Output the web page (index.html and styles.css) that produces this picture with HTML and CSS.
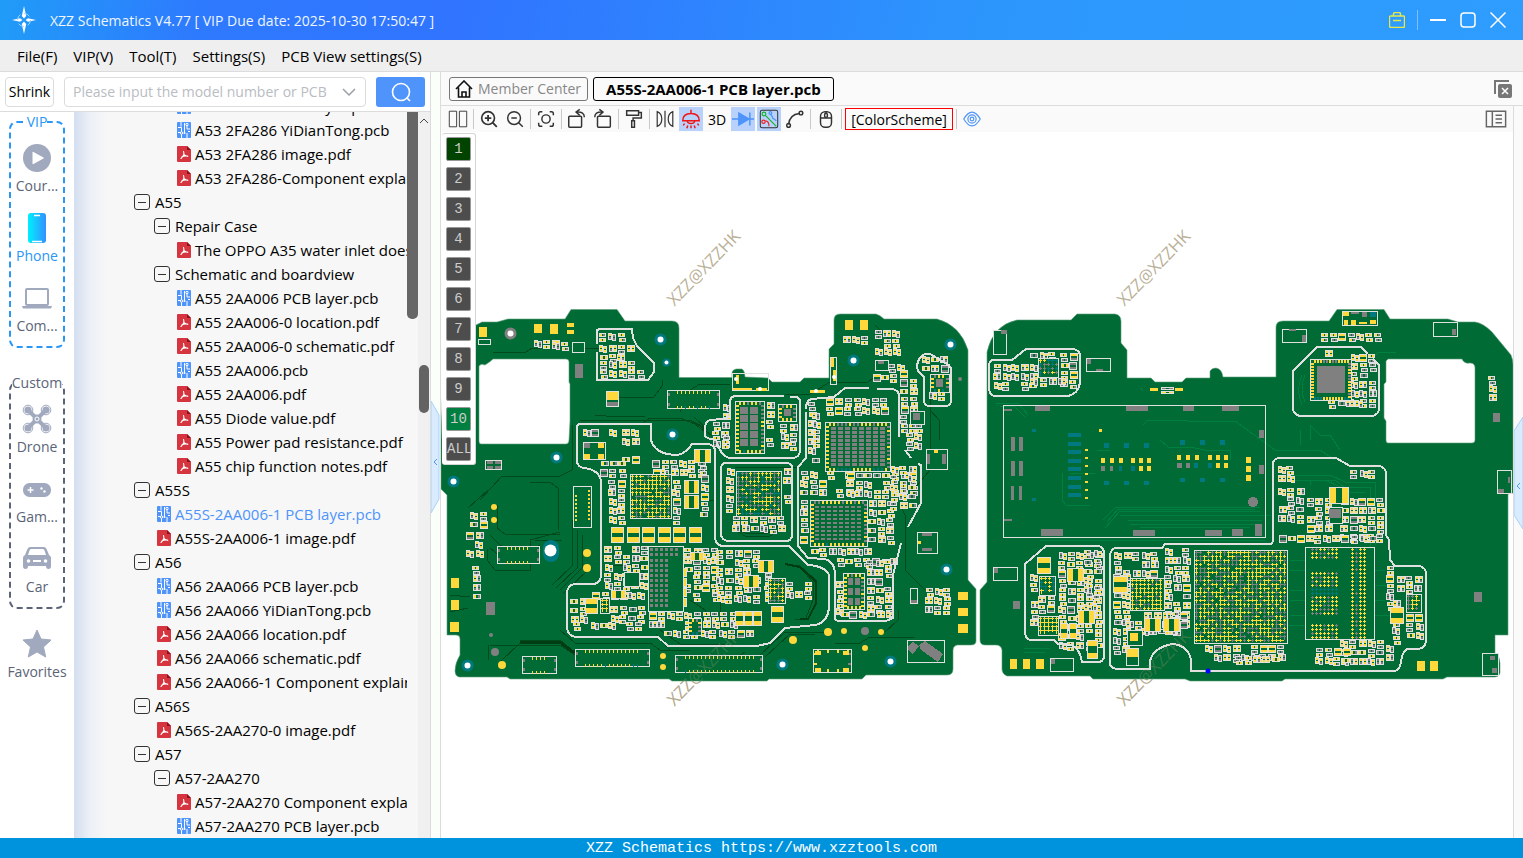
FILE: index.html
```html
<!DOCTYPE html>
<html lang="en">
<head>
  <meta charset="UTF-8">
  <meta name="viewport" content="width=device-width, initial-scale=1.0">
  <title>XZZ Schematics</title>
  <link rel="stylesheet" href="styles.css">
</head>
<body>

  <svg class="sprite" aria-hidden="true">
    <symbol id="pcb" viewBox="0 0 14 16">
      <rect width="14" height="16" rx="1" fill="#4e94fb"/>
      <path d="M4 0v4.500M1 5.500h3.500v5M10 3v4h3M7.500 1v9.500M4.500 12v4M10 16v-5M1 10.500h2M11 9.500h2" fill="none" stroke="#fff"/>
      <circle cx="10" cy="2.500" r="1.200" fill="#4e94fb" stroke="#fff"/>
      <circle cx="4.500" cy="11" r="1.200" fill="#4e94fb" stroke="#fff"/>
      <circle cx="7.500" cy="11" r="1" fill="#fff"/>
    </symbol>
    <symbol id="pdf" viewBox="0 0 14 16">
      <path d="M1 0h9l4 4v11a1 1 0 0 1-1 1H1a1 1 0 0 1-1-1V1a1 1 0 0 1 1-1z" fill="#d6353f"/>
      <path d="M10 0l4 4h-4z" fill="#8e1018"/>
      <path d="M6.500 5.500c1 2 .5 4-2.500 7M6.800 8c.8 1.500 2 2.500 4 2.500M5 10.800c2-1 3.500-1.200 5.500-.8" fill="none" stroke="#fff" stroke-width="1.100" stroke-linecap="round"/>
    </symbol>
  </svg>

  <header class="titlebar">
    <svg class="logo" viewBox="0 0 24 28">
      <path d="M12 0l2.200 10L12 12.500 9.800 10zM12 28l2.200-10L12 15.500 9.800 18zM0 14l8-1.800 2.500 1.800L8 15.800zM24 14l-8-1.800-2.500 1.800 2.500 1.800z" fill="#fff"/>
      <circle cx="12" cy="14" r="6.500" fill="none" stroke="#9fd4ff" stroke-dasharray="6 4"/>
    </svg>
    <h1>XZZ Schematics V4.77 [ VIP Due date: 2025-10-30 17:50:47 ]</h1>
    <button class="win-btn" aria-label="Toolbox">
      <svg viewBox="0 0 16 16"><path d="M1.500 4h13q1 0 1 1v9q0 1.500-1.500 1.500H2Q.5 15.500.5 14V5q0-1 1-1zM4.500 4V2q0-1.500 1.500-1.500h4q1.500 0 1.500 1.500v2M4 8.500h8" fill="none" stroke="#e5e84a" stroke-width="1.400"/></svg>
    </button>
    <span class="win-sep"></span>
    <button class="win-btn" aria-label="Minimize">
      <svg viewBox="0 0 16 16"><path d="M0 8h16" stroke="#fff" stroke-width="2"/></svg>
    </button>
    <button class="win-btn" aria-label="Maximize">
      <svg viewBox="0 0 16 16"><rect x="1" y="1" width="14" height="14" rx="3" fill="none" stroke="#fff" stroke-width="1.500"/></svg>
    </button>
    <button class="win-btn" aria-label="Close">
      <svg viewBox="0 0 16 16"><path d="M.5.500l15 15M15.500.500l-15 15" stroke="#fff" stroke-width="1.500"/></svg>
    </button>
  </header>

  <nav class="menubar">
    <button>File(F)</button>
    <button>VIP(V)</button>
    <button>Tool(T)</button>
    <button>Settings(S)</button>
    <button>PCB View settings(S)</button>
  </nav>

  <main class="main">
    <section class="left">
      <form class="search" onsubmit="return false">
        <button type="button" class="shrink">Shrink</button>
        <div class="search-box">
          <input type="text" aria-label="Model number" placeholder="Please input the model number or PCB">
          <svg viewBox="0 0 14 10"><path d="M1 2l6 6 6-6" fill="none" stroke="#9a9ea6" stroke-width="1.500"/></svg>
        </div>
        <button type="submit" class="search-btn" aria-label="Search">
          <svg viewBox="0 0 20 20"><circle cx="10" cy="10" r="8.500" fill="none" stroke="#fff" stroke-width="1.600"/><path d="M15.500 15.500l3.500 3.500" stroke="#fff" stroke-width="1.600"/></svg>
        </button>
      </form>

      <div class="browser">
        <div class="sidebar">
          <fieldset class="group vip">
            <legend>VIP</legend>
            <button class="cat">
              <svg viewBox="0 0 30 32"><circle cx="15" cy="16" r="14" fill="#a0a9be"/><path d="M10.500 10.500v11q0 1 1 .5l10-5.500q.8-.5 0-1l-10-5.500q-1-.5-1 .5z" fill="#fff"/></svg>
              <span>Cour...</span>
            </button>
            <button class="cat on">
              <svg viewBox="0 0 30 32">
                <defs><linearGradient id="ph"><stop offset="0" stop-color="#00f0ff"/><stop offset="1" stop-color="#3390ff"/></linearGradient></defs>
                <rect x="6" y="1" width="18" height="30" rx="3" fill="url(#ph)"/>
                <path d="M12 3.500h6M10 29.500h10" stroke="#fff" stroke-width="1.300"/>
              </svg>
              <span>Phone</span>
            </button>
            <button class="cat">
              <svg viewBox="0 0 30 32"><rect x="4" y="7" width="22" height="16" rx="1" fill="none" stroke="#a0a9be" stroke-width="2"/><path d="M0 24h30l-1 2.500H1z" fill="#a0a9be"/></svg>
              <span>Com...</span>
            </button>
          </fieldset>
          <fieldset class="group">
            <legend>Custom</legend>
            <button class="cat">
              <svg viewBox="0 0 30 32">
                <path d="M6 7l9 9 9-9M6 25l9-9 9 9" fill="none" stroke="#a0a9be" stroke-width="4"/>
                <circle cx="15" cy="16" r="4.500" fill="#a0a9be"/><circle cx="15" cy="16" r="2" fill="none" stroke="#fff"/>
                <g fill="#a0a9be"><circle cx="6" cy="7" r="3.600"/><circle cx="24" cy="7" r="3.600"/><circle cx="6" cy="25" r="3.600"/><circle cx="24" cy="25" r="3.600"/></g>
                <g fill="none" stroke="#a0a9be"><circle cx="6" cy="7" r="4.800"/><circle cx="24" cy="7" r="4.800"/><circle cx="6" cy="25" r="4.800"/><circle cx="24" cy="25" r="4.800"/></g>
              </svg>
              <span>Drone</span>
            </button>
            <button class="cat">
              <svg viewBox="0 0 30 32"><rect x="1" y="10" width="28" height="14" rx="6.500" fill="#a0a9be"/><path d="M5.500 17h6M8.500 14v6" stroke="#fff" stroke-width="1.500"/><circle cx="19.500" cy="15.500" r="1.200" fill="#fff"/><circle cx="22.500" cy="18.500" r="1.200" fill="#fff"/></svg>
              <span>Gam...</span>
            </button>
            <button class="cat">
              <svg viewBox="0 0 30 32">
                <path d="M8 4h14q2 0 3 3l2 5q2 1 2 3v8q0 3-2.500 3T24 23H6q0 3-2.500 3T1 23v-8q0-2 2-3l2-5q1-3 3-3z" fill="#a0a9be"/>
                <path d="M9 6h12q1 0 1.500 1.500L24 12H6l1.500-4.500Q8 6 9 6z" fill="#fff"/>
                <circle cx="6.500" cy="18" r="1.800" fill="#fff"/><circle cx="23.500" cy="18" r="1.800" fill="#fff"/><path d="M11 18h8" stroke="#fff" stroke-width="2"/>
              </svg>
              <span>Car</span>
            </button>
          </fieldset>
          <button class="cat fav">
            <svg viewBox="0 0 30 32"><path d="M15 2l4 9 10 1-7.500 7 2.200 10-8.700-5-8.700 5 2.200-10L1 12l10-1z" fill="#a0a9be" stroke="#a0a9be" stroke-linejoin="round"/></svg>
            <span>Favorites</span>
          </button>
        </div>

        <div class="tree-wrap">
          <ul class="tree">
            <li>
              <ul>
                <li>
                  <ul>
                    <li><a href="#"><svg><use href="#pcb"/></svg>A53 2FA286 PCB layer.pcb</a></li>
                    <li><a href="#"><svg><use href="#pcb"/></svg>A53 2FA286 YiDianTong.pcb</a></li>
                    <li><a href="#"><svg><use href="#pdf"/></svg>A53 2FA286 image.pdf</a></li>
                    <li><a href="#"><svg><use href="#pdf"/></svg>A53 2FA286-Component explain</a></li>
                  </ul>
                </li>
              </ul>
            </li>
            <li>
              <button class="node">A55</button>
              <ul>
                <li>
                  <button class="node">Repair Case</button>
                  <ul>
                    <li><a href="#"><svg><use href="#pdf"/></svg>The OPPO A35 water inlet does</a></li>
                  </ul>
                </li>
                <li>
                  <button class="node">Schematic and boardview</button>
                  <ul>
                    <li><a href="#"><svg><use href="#pcb"/></svg>A55 2AA006 PCB layer.pcb</a></li>
                    <li><a href="#"><svg><use href="#pdf"/></svg>A55 2AA006-0 location.pdf</a></li>
                    <li><a href="#"><svg><use href="#pdf"/></svg>A55 2AA006-0 schematic.pdf</a></li>
                    <li><a href="#"><svg><use href="#pcb"/></svg>A55 2AA006.pcb</a></li>
                    <li><a href="#"><svg><use href="#pdf"/></svg>A55 2AA006.pdf</a></li>
                    <li><a href="#"><svg><use href="#pdf"/></svg>A55 Diode value.pdf</a></li>
                    <li><a href="#"><svg><use href="#pdf"/></svg>A55 Power pad resistance.pdf</a></li>
                    <li><a href="#"><svg><use href="#pdf"/></svg>A55 chip function notes.pdf</a></li>
                  </ul>
                </li>
              </ul>
            </li>
            <li>
              <button class="node">A55S</button>
              <ul>
                <li><a href="#" class="current"><svg><use href="#pcb"/></svg>A55S-2AA006-1 PCB layer.pcb</a></li>
                <li><a href="#"><svg><use href="#pdf"/></svg>A55S-2AA006-1 image.pdf</a></li>
              </ul>
            </li>
            <li>
              <button class="node">A56</button>
              <ul>
                <li><a href="#"><svg><use href="#pcb"/></svg>A56 2AA066 PCB layer.pcb</a></li>
                <li><a href="#"><svg><use href="#pcb"/></svg>A56 2AA066 YiDianTong.pcb</a></li>
                <li><a href="#"><svg><use href="#pdf"/></svg>A56 2AA066 location.pdf</a></li>
                <li><a href="#"><svg><use href="#pdf"/></svg>A56 2AA066 schematic.pdf</a></li>
                <li><a href="#"><svg><use href="#pdf"/></svg>A56 2AA066-1 Component explain</a></li>
              </ul>
            </li>
            <li>
              <button class="node">A56S</button>
              <ul>
                <li><a href="#"><svg><use href="#pdf"/></svg>A56S-2AA270-0 image.pdf</a></li>
              </ul>
            </li>
            <li>
              <button class="node">A57</button>
              <ul>
                <li>
                  <button class="node">A57-2AA270</button>
                  <ul>
                    <li><a href="#"><svg><use href="#pdf"/></svg>A57-2AA270 Component explain</a></li>
                    <li><a href="#"><svg><use href="#pcb"/></svg>A57-2AA270 PCB layer.pcb</a></li>
                  </ul>
                </li>
              </ul>
            </li>
          </ul>
        </div>
        <div class="inner-scroll"><div class="thumb"></div></div>
        <div class="outer-scroll">
          <svg viewBox="0 0 12 18"><path d="M2 11l4-4 4 4" fill="none" stroke="#444"/></svg>
          <div class="thumb"></div>
        </div>
      </div>
    </section>

    <div class="gutter">
      <svg class="handle" viewBox="0 0 9 126"><path d="M0 9l8 14v84l-8 14z" fill="#d9ebff" stroke="#a9d2f7"/><path d="M6 67l-3 3 3 3" fill="none" stroke="#4f9bea"/></svg>
    </div>

    <section class="right">
      <div class="tabs">
        <button class="tab"><svg viewBox="0 0 18 18"><path d="M1 9l8-8 8 8M3.500 7.500V17h11V7.500M7 17v-5h4v5" fill="none" stroke="#111" stroke-width="1.600"/></svg>Member Center</button>
        <button class="tab active">A55S-2AA006-1 PCB layer.pcb</button>
        <button class="close-all" aria-label="Close all tabs">
          <svg viewBox="0 0 18 18"><path d="M1 14V1h14" fill="none" stroke="#777" stroke-width="2"/><rect x="4" y="4" width="14" height="14" rx="2" fill="#777"/><path d="M8 8l6 6M14 8l-6 6" stroke="#fff" stroke-width="1.500"/></svg>
        </button>
      </div>

      <div class="work">
        <div class="stage">
          <div class="toolbar">
            <button aria-label="Split view"><svg viewBox="0 0 24 24"><path d="M2.500 3.500h8v17h-8zM13.500 3.500h8v17h-8z" stroke-width="1"/></svg></button>
            <span class="sep"></span>
            <button aria-label="Zoom in"><svg viewBox="0 0 24 24"><circle cx="11" cy="11" r="7" stroke-width="1.800"/><path d="M16 16l4.500 4.500M7.500 11h7M11 7.500v7" stroke-width="2"/></svg></button>
            <button aria-label="Zoom out"><svg viewBox="0 0 24 24"><circle cx="11" cy="11" r="7"/><path d="M16 16l4.500 4.500M8 11h6"/></svg></button>
            <span class="sep"></span>
            <button aria-label="Fit"><svg viewBox="0 0 24 24"><circle cx="12" cy="12" r="4.500"/><path d="M4 8V6q0-2 2-2h2M16 4h2q2 0 2 2v2M20 16v2q0 2-2 2h-2M8 20H6q-2 0-2-2v-2"/></svg></button>
            <span class="sep"></span>
            <button aria-label="Rotate left"><svg viewBox="0 0 24 24"><rect x="3" y="9" width="14" height="12" rx="1"/><path d="M20 10q0-6-8-5.500M15 1.500l-4 3 4 3.500"/></svg></button>
            <button aria-label="Rotate right"><svg viewBox="0 0 24 24"><rect x="6" y="9" width="14" height="12" rx="1"/><path d="M3 10q0-6 8-5.500M8 1.500l4 3-4 3.500"/></svg></button>
            <span class="sep"></span>
            <button aria-label="Paint"><svg viewBox="0 0 24 24"><path d="M4 3h13v5H4zM17 5h3v6h-9v3M9.500 14h3v7h-3z"/></svg></button>
            <span class="sep"></span>
            <button aria-label="Mirror"><svg viewBox="0 0 24 24"><path d="M3.500 4v16q5-2 5-8t-5-8zM12 3v18M20.500 4v16q-5-2-5-8t5-8z" stroke-width="1.300"/></svg></button>
            <button class="on" aria-label="Lamp"><svg viewBox="0 0 24 24" class="red"><path d="M12 2v4M3 14q0-8 9-8t9 8zM8 14q0 3 4 3t4-3M5 17l-1.500 2M8.500 19l-1 3M12 19v3M15.500 19l1 3M19 17l1.500 2"/></svg></button>
            <button>3D</button>
            <button class="on" aria-label="Diode"><svg viewBox="0 0 24 24" class="blue"><path d="M0 12h24M19.500 5v14"/><path d="M7.500 5.500l11 6.500-11 6.500z" fill="#4e94fb"/></svg></button>
            <button class="on" aria-label="Nets"><svg viewBox="0 0 24 24"><rect x="2.500" y="2.500" width="19" height="19" rx="2" stroke-width="1.100"/><g stroke-width="1.300"><path d="M8 8l12 12" stroke="#10b52c"/><circle cx="6.500" cy="6.500" r="2" stroke="#10b52c"/><path d="M13 7q2 0 3 4l4 3" stroke="#4e94fb"/><circle cx="13.500" cy="5.500" r="1.500" stroke="#4e94fb"/><path d="M8 14q4 0 4 6" stroke="#e22"/><circle cx="6" cy="15" r="1.800" stroke="#e22"/></g></svg></button>
            <button aria-label="Curve"><svg viewBox="0 0 24 24"><path d="M5 18Q6 7 17 6"/><circle cx="5" cy="19" r="2"/><circle cx="18.500" cy="5.500" r="2"/></svg></button>
            <span class="sep"></span>
            <button aria-label="Mouse"><svg viewBox="0 0 24 24"><rect x="6" y="4" width="12" height="17" rx="5"/><path d="M6 11h12M12 4v7"/><rect x="10.500" y="6" width="3" height="4" rx="1" fill="#fafafa"/></svg></button>
            <span class="sep"></span>
            <button class="scheme">[ColorScheme]</button>
            <span class="sep"></span>
            <button aria-label="Show"><svg viewBox="0 0 24 24" class="blue"><path d="M3 12q9-15 18 0q-9 15-18 0z" stroke-width="1.300"/><circle cx="12" cy="12" r="4.500" stroke-width="1.300"/><circle cx="12" cy="12" r="2" stroke-width="1.300"/></svg></button>
            <button class="panel-btn" aria-label="Side panel"><svg viewBox="0 0 24 24"><path d="M1.500 3.500h21v17h-21zM8 3.500v17M11.500 8h7M11.500 12h7M11.500 16h7" stroke="#666"/></svg></button>
          </div>
          <div class="canvas">
            <svg class="board" id="board" viewBox="441 132 1072 706"></svg>
            <div class="layers">
              <button class="l1">1</button>
              <button>2</button>
              <button>3</button>
              <button>4</button>
              <button>5</button>
              <button>6</button>
              <button>7</button>
              <button>8</button>
              <button>9</button>
              <button class="l10">10</button>
              <button>ALL</button>
            </div>
          </div>
        </div>
        <div class="edge">
          <svg class="handle" viewBox="0 0 9 126"><path d="M9 8L0 22v84l9 14z" fill="#d9ebff" stroke="#a9d2f7"/><path d="M6 74l-3 3 3 3" fill="none" stroke="#4f9bea"/></svg>
        </div>
      </div>
    </section>
  </main>

  <footer class="footer">XZZ Schematics https://www.xzztools.com</footer>

  <script src="board.js"></script>
</body>
</html>
```
FILE: styles.css
```css
* {
  box-sizing: border-box;
}
body {
  margin: 0;
  height: 100vh;
  display: flex;
  flex-direction: column;
  overflow: hidden;
  font-family: "Open Sans", "Noto Sans", sans-serif;
  font-size: 14px;
  color: #000;
  background: #fff;
}
button {
  font: inherit;
  color: inherit;
  background: none;
  border: none;
  padding: 0;
}
button svg {
  display: block;
}
.sprite {
  display: none;
}

/* title bar */
.titlebar {
  height: 40px;
  flex: none;
  display: flex;
  align-items: center;
  gap: 14px;
  padding: 0 17px 0 12px;
  background: linear-gradient(100deg, #209cf8 0%, #2e7afe 13%, #3074ff 30%, #2c96fc 65%, #2e9dfe 100%);
}
.logo {
  width: 24px;
  height: 28px;
}
.titlebar h1 {
  flex: 1;
  margin: 0;
  font-size: 14px;
  font-weight: normal;
  color: #eef5ff;
}
.win-btn {
  width: 16px;
  height: 16px;
}
.win-sep {
  width: 1px;
  height: 20px;
  margin: 0 -2px;
  background: #7cc0fd;
}

/* menu */
.menubar {
  height: 32px;
  flex: none;
  display: flex;
  align-items: center;
  gap: 16px;
  padding: 0 17px;
  font-size: 15px;
  background: #efefef;
  border-bottom: 1px solid #dcdcdc;
}

.main {
  flex: 1;
  min-height: 0;
  display: flex;
}
.left {
  width: 431px;
  flex: none;
  display: flex;
  flex-direction: column;
  border-right: 1px solid #dcdcdc;
}
.search {
  height: 40px;
  flex: none;
  display: flex;
  align-items: center;
  gap: 10px;
  padding: 0 5px;
  border-bottom: 1px solid #dcdcdc;
}
.shrink {
  width: 49px;
  height: 30px;
  border: 1px solid #dcdcdc;
  border-radius: 4px;
}
.search-box {
  flex: 1;
  height: 30px;
  display: flex;
  align-items: center;
  gap: 7px;
  padding: 0 9px 0 8px;
  border: 1px solid #dcdcdc;
  border-radius: 4px;
}
.search-box input {
  flex: 1;
  min-width: 0;
  padding: 0;
  border: none;
  font: inherit;
}
.search-box input::placeholder {
  color: #b9bcc2;
}
.search-box svg {
  width: 14px;
  height: 10px;
}
.search-btn {
  width: 49px;
  height: 30px;
  display: flex;
  align-items: center;
  justify-content: center;
  background: #4e94fb;
  border-radius: 3px;
}
.search-btn svg {
  width: 20px;
  height: 20px;
}

/* category sidebar */
.browser {
  flex: 1;
  min-height: 0;
  display: flex;
}
.sidebar {
  width: 74px;
  flex: none;
}
.group {
  margin: 0 9px 25px;
  padding: 8px 0;
  min-width: 0;
  border: 2px dashed #5b6477;
  border-radius: 8px;
  color: #5b6477;
}
.group.vip {
  border-color: #2a97f5;
}
.group legend {
  margin: 0 auto;
  padding: 0;
  line-height: 20px;
}
.vip legend {
  color: #2a97f5;
}
.cat {
  width: 100%;
  height: 58px;
  display: flex;
  flex-direction: column;
  align-items: center;
  justify-content: center;
  gap: 2px;
  color: #5b6477;
}
.cat + .cat {
  margin-top: 12px;
}
.cat svg {
  width: 30px;
  height: 32px;
}
.cat span {
  line-height: 20px;
}
.cat.on {
  color: #2a97f5;
}
.fav {
  margin-top: -8px;
}

/* file tree */
.tree-wrap {
  flex: 1;
  min-width: 0;
  overflow: hidden;
  display: flex;
  flex-direction: column;
  justify-content: flex-end;
  background: linear-gradient(90deg, #d3def0 0, #edf0f6 16px, #f7f7f7 34px);
}
.tree,
.tree ul {
  margin: 0;
  padding: 0;
  list-style: none;
  white-space: nowrap;
}
.tree {
  padding-left: 60px;
  font-size: 15px;
}
.tree ul {
  padding-left: 20px;
}
.node,
.tree a {
  height: 24px;
  display: flex;
  align-items: center;
  color: #000;
  text-decoration: none;
}
.node {
  gap: 5px;
}
.node::before {
  content: "";
  width: 14px;
  height: 14px;
  border: 1px solid #333;
  border-radius: 3px;
  background: linear-gradient(#333, #333) center / 8px 1px no-repeat;
}
.tree a {
  gap: 4px;
  padding-left: 3px;
}
.tree a svg {
  width: 14px;
  height: 16px;
  flex: none;
}
.tree a.current {
  color: #4e94fb;
}
.inner-scroll {
  width: 11px;
  background: #f7f7f7;
}
.inner-scroll .thumb {
  height: 207px;
  background: #666;
  border-radius: 0 0 5px 5px;
}
.outer-scroll {
  width: 12px;
  background: #f0f0f0;
}
.outer-scroll svg {
  display: block;
  width: 12px;
  height: 18px;
}
.outer-scroll .thumb {
  width: 10px;
  height: 48px;
  margin: 235px 1px 0;
  background: #636363;
  border-radius: 5px;
}

.gutter {
  width: 10px;
  flex: none;
  display: flex;
  align-items: center;
  background: #fafffa;
  border-right: 1px solid #dcdcdc;
}
.handle {
  width: 9px;
  height: 126px;
}

/* viewer */
.right {
  flex: 1;
  min-width: 0;
  display: flex;
  flex-direction: column;
}
.tabs {
  height: 34px;
  flex: none;
  display: flex;
  align-items: center;
  gap: 5px;
  padding: 0 11px 0 8px;
  background: #fafafa;
  border-bottom: 1px solid #dcdcdc;
}
.tab {
  height: 24px;
  display: flex;
  align-items: center;
  gap: 5px;
  padding: 0 6px 0 5px;
  border: 1px solid #777;
  border-radius: 3px;
  color: #888;
}
.tab svg {
  width: 18px;
  height: 18px;
}
.tab.active {
  padding: 0 12px;
  border-color: #000;
  color: #000;
  font-size: 15px;
  line-height: 20px;
  font-weight: bold;
}
.close-all {
  width: 18px;
  margin-left: auto;
}
.work {
  flex: 1;
  min-height: 0;
  display: flex;
}
.stage {
  flex: 1;
  min-width: 0;
  display: flex;
  flex-direction: column;
}
.toolbar {
  height: 26px;
  flex: none;
  display: flex;
  align-items: center;
  gap: 2px;
  padding: 0 5px;
  background: #fafafa;
}
.toolbar button {
  width: 24px;
  height: 24px;
  flex: none;
}
.toolbar svg {
  width: 24px;
  height: 24px;
  padding: 1px;
  fill: none;
  stroke: #333;
  stroke-width: 1.6;
}
.toolbar svg.red {
  stroke: #f01414;
}
.toolbar svg.blue {
  stroke: #4e94fb;
}
.toolbar .on {
  background: #b9d2fb;
}
.toolbar .scheme {
  width: 108px;
  height: 22px;
  border: 1px solid #f00;
}
.toolbar .panel-btn {
  margin-left: auto;
}
.sep {
  width: 1px;
  height: 20px;
  margin: 0 1px;
  background: #c8c8c8;
}
.canvas {
  flex: 1;
  min-height: 0;
  position: relative;
}
.board {
  display: block;
  width: 100%;
  height: 100%;
}
.board text {
  font-family: "Open Sans", sans-serif;
  font-size: 17px;
}
.layers {
  position: absolute;
  top: 1px;
  left: 1px;
  display: flex;
  flex-direction: column;
  gap: 6px;
  padding: 3px 4px;
  background: #fff;
  border: 1px solid #d5d5d5;
  border-left: none;
  border-radius: 3px;
}
.layers button {
  width: 25px;
  height: 24px;
  font-family: "Liberation Mono", monospace;
  font-size: 14px;
  color: #ccc;
  background: #4d4d4d;
  border: 1px solid #999;
  border-radius: 2px;
}
.layers .l1 {
  background: #004400;
}
.layers .l10 {
  background: #008040;
}
.edge {
  width: 10px;
  flex: none;
  display: flex;
  align-items: center;
  background: #fafafa;
  border-left: 1px solid #dcdcdc;
}

.footer {
  height: 20px;
  flex: none;
  line-height: 22px;
  text-align: center;
  font-family: "Liberation Mono", monospace;
  font-size: 15px;
  color: #fff;
  background: #0093dd;
}
```
FILE: board.js
```js
var BOARD = '#006b34', YELLOW = '#ffd83c', GRAY = '#808080', TEAL = '#007a80', LINE = '#e0e0e0';
var out = [];

// small seeded generator so the parts stay in place on every load
var seed = 4177;
function rnd() {
  seed = (seed * 16807) % 2147483647;
  return seed / 2147483647;
}
function pick(list) {
  return list[Math.floor(rnd() * list.length)];
}

function rect(x, y, w, h, fill) {
  out.push('<rect x="' + x + '" y="' + y + '" width="' + w + '" height="' + h + '" fill="' + fill + '"/>');
}
function box(x, y, w, h) {
  out.push('<rect x="' + (x + 0.5) + '" y="' + (y + 0.5) + '" width="' + w + '" height="' + h + '" fill="' + BOARD + '" stroke="' + LINE + '"/>');
}
function line(d, color, width) {
  out.push('<path d="' + d + '" fill="none" stroke="' + color + '" stroke-width="' + width + '"/>');
}
function dot(x, y, r, fill) {
  out.push('<circle cx="' + x + '" cy="' + y + '" r="' + r + '" fill="' + fill + '"/>');
}
function hole(x, y, ring) {
  dot(x + 0.5, y + 0.5, 6, ring || TEAL);
  dot(x + 0.5, y + 0.5, 3, '#fff');
}

// two-pad part: pads at both ends of an outlined body
function part(x, y, w, h, color) {
  box(x, y, w, h);
  var c = color || pick([YELLOW, YELLOW, YELLOW, GRAY]);
  var p;
  if (w > h) {
    p = Math.max(2, Math.round(w * 0.3));
    rect(x + 1, y + 1, p, h - 1, c);
    rect(x + w - p, y + 1, p, h - 1, color || pick([c, c, GRAY]));
  } else {
    p = Math.max(2, Math.round(h * 0.3));
    rect(x + 1, y + 1, w - 1, p, c);
    rect(x + 1, y + h - p, w - 1, p, color || pick([c, c, GRAY]));
  }
}

// fills an area with small parts
function scatter(x, y, w, h) {
  for (var j = 0; j + 8 <= h; j += 9) {
    for (var i = 0; i + 7 <= w; i += 9) {
      var k = rnd();
      var px = x + i + Math.floor(rnd() * 2), py = y + j;
      if (k < 0.34) {
        part(px, py, 6, 3);
        part(px + Math.floor(rnd() * 2), py + 5, 6, 3);
      } else if (k < 0.74) {
        part(px, py, 3, 6);
        part(px + 4, py + Math.floor(rnd() * 2), 3, 6);
      } else if (k < 0.84) {
        part(px, py, 7, 7);
      } else if (k < 0.94) {
        part(px, py + 1, 7, 4);
      }
    }
  }
}

function grid(x, y, cols, rows, dx, dy, w, h, fill) {
  for (var j = 0; j < rows; j++) {
    for (var i = 0; i < cols; i++) rect(x + i * dx, y + j * dy, w, h, fill);
  }
}

// pins around the inside edge
function pins(x, y, w, h, step) {
  for (var i = 4; i < w - 3; i += step) {
    rect(x + i, y + 1, 2, 3, pick([YELLOW, YELLOW, GRAY]));
    rect(x + i, y + h - 3, 2, 3, pick([YELLOW, YELLOW, TEAL]));
  }
  for (var j = 4; j < h - 3; j += step) {
    rect(x + 1, y + j, 3, 2, YELLOW);
    rect(x + w - 3, y + j, 3, 2, pick([YELLOW, GRAY]));
  }
}

function ball(x, y, fill, wide, tall) {
  rect(x - 1, y, wide ? 5 : 3, 1, fill);
  rect(x, y - 1, 1, tall ? 5 : 3, fill);
}

function bga(x, y, w, h, colors, fill) {
  box(x, y, w, h);
  for (var j = 2; j < h - 1; j += 4) {
    for (var i = 2; i < w - 1; i += 4) {
      if (rnd() > fill) continue;
      ball(x + i, y + j, pick(colors), i < w - 4 && rnd() < 0.55, j < h - 4 && rnd() < 0.55);
    }
  }
}

function connector(x, y, w, h) {
  box(x, y, w, h);
  for (var i = 10; i < w - 8; i += 4) {
    rect(x + i, y + 1, 1, 3, YELLOW);
    rect(x + i, y + h - 2, 1, 3, pick([YELLOW, YELLOW, TEAL]));
  }
  rect(x + 1, y + 3, 2, 3, GRAY);
  rect(x + w - 2, y + 3, 2, 3, GRAY);
  rect(x + 1, y + h - 5, 2, 3, GRAY);
  rect(x + w - 2, y + h - 5, 2, 3, GRAY);
}

function each(list, fn) {
  list.forEach(function (a) { fn.apply(null, a); });
}

function watermark(x, y, opacity) {
  out.push('<text x="' + x + '" y="' + y + '" text-anchor="middle" fill="#a89c7c" fill-opacity="' + opacity + '" transform="rotate(-46 ' + x + ' ' + y + ')">XZZ@XZZHK</text>');
}

watermark(708, 272, 0.8);
watermark(1158, 272, 0.8);
watermark(708, 672, 0.8);
watermark(1158, 672, 0.8);

// board shapes with their cut-outs
var left = 'M445 325H476L482 322H497L508 319H565L571 309.500H617L625 321H672Q679 321 679 328V377.500H732V373Q732 370 736 369H742Q745 371 745 377L768 378L772 382H800L804 378H829V349L834 344V320Q834 314 840 314H876Q880 315 884 319H937Q960 325 968 350V580L976 589V641Q976 645 971 645H957Q953 646 953 650V669Q953 675 947 675H866L862 679H769L767 681H672L669 679H510L507 677H459Q455 676 455 671Q455 663 460 655V639Q460 635 456 635H447V495L441 489V440Z' +
  'M493 359H566Q569 359 569 362V382L570 384V421L569 440Q569 444 566 444H481Q479 444 479 441V366Q481 363 485 365Q490 362 493 359Z';
var right = 'M987 352Q993 325 1017 320H1071L1077 314H1115Q1121 315 1121 321V343L1127 350V378H1151L1155 382H1182L1186 378H1210V371Q1212 368 1216 368Q1222 369 1223 377H1276V327Q1276 321 1283 321H1329L1337 309.500H1384L1390 319H1448L1458 322H1475Q1483 323 1492 332L1511 355Q1513 360 1513 364V493L1508 494V635H1495V653Q1500 657 1500 663V673Q1499 677 1495 677H1447L1443 679H1285L1282 681H1190L1185 679H1093L1090 676H1007Q1002 674 1002 669V650Q1001 645 996 645H985Q980 645 980 640V590L987 582Z' +
  'M1388 359H1462Q1464 364 1470 363Q1475 363 1475 368V440Q1475 443 1472 443H1388Q1386 443 1386 440V421L1384 418V384L1386 382V361Z';
out.push('<path d="' + left + right + '" fill="' + BOARD + '" fill-rule="evenodd" stroke="#5f9f7c" stroke-width=".6"/>');

out.push('<g shape-rendering="crispEdges">');

// copper traces
each([
  ['M493 352H526L532 348H540M585 348H600M618 397H654L662 386V380M595 415H600L606 416H645M580 420H690L705 428'],
  ['M480 500L502 476H560L572 470V425M530 482H550L558 488V530M468 508L488 490M497 505V528L505 534H560'],
  ['M552 585L572 566V530L575 500M556 588L577 568V530M560 590L582 568V535M563 594L590 568M535 540H562M490 548L500 556H525L540 545'],
  ['M490 645H560L575 655H610M488 660V645M520 640H560L572 650H625M560 630L575 643H650L660 650H690M500 662L520 643M660 630L680 644H725M656 634L670 650'],
  ['M578 658H585L590 661H615L622 655M688 662H730L745 652M760 655L785 632H830M765 657L790 634H815M835 643H860L870 637H915'],
  ['M785 564L800 566L816 580V605L808 619H795M788 565H798L813 582V600L806 618M735 530L745 536H770L780 530M733 526L745 533H768L778 526'],
  ['M785 394H810L830 382H868L876 376H890M875 325L890 340M930 367V470L905 500M939 440V420L930 410M900 505L905 515V570L925 590'],
  ['M705 500H715M800 467H735M898 610V620L885 632M610 565H640L645 575M700 575L720 590V625'],
  ['M450 595L470 597M450 612L468 608M487 549V560L495 570H530V540L560 532M690 600L705 610V635H740'],
  ['M680 412L690 390L700 384H730M640 425L650 418H680L700 426L712 436M690 420L705 432M694 417L708 430M490 535L500 545V552M500 545L515 553H535']
], function (d) { line(d, '#004a1c', 1); });
line('M520 642H560L572 651H600', '#003d12', 3);
line('M582 658H595L600 661H615', '#003d12', 4);
line('M785 564L800 567L816 582V603L808 619H800', '#003d12', 2);
each([
  ['M1143 425L1148 420H1183L1188 421H1235L1275 450H1320M1143 390L1140 388M1160 440L1168 447H1190L1205 450H1230V460'],
  ['M1103 520L1116 507H1260M1107 522L1118 509H1255M1105 528L1120 511H1260M1120 515H1270M1128 520H1262M1130 524H1258M1140 527H1250'],
  ['M1062 473V500L1066 505H1090M1070 473H1095M1040 540H1200M1145 540H1110M1195 540H1265'],
  ['M996 403H1018L1028 415M1000 406H1014L1026 418M1097 450H1110M1310 440V425L1320 435H1330L1340 450M1300 430V445M1320 450L1335 460'],
  ['M1285 475H1330L1345 482H1375V545M1290 480H1325L1340 487H1370V550M1310 485V480H1335L1350 492H1365M1300 490V520'],
  ['M1290 560H1305M1290 570H1305M1290 590H1305M1290 600H1305M1290 615H1305M1288 625H1305M1375 570H1385M1375 585H1390M1375 600H1385M1375 615H1390'],
  ['M1302 375Q1295 390 1302 405M1305 375Q1299 390 1305 402M1372 360L1378 352H1396M1024 648H1050M1024 652H1045M1340 545V640M1348 545V638']
], function (d) { line(d, '#008040', 1); });

// parts in the left board
each([
  [599, 333, 30, 12], [599, 345, 38, 18], [600, 361, 50, 19],
  [582, 429, 20, 10], [609, 429, 14, 10], [622, 429, 24, 36], [600, 460, 28, 20], [608, 480, 20, 46], [652, 460, 54, 18], [672, 480, 12, 44], [700, 466, 14, 60],
  [604, 546, 44, 46], [570, 598, 22, 30], [592, 592, 56, 14], [610, 606, 40, 20], [572, 622, 76, 12], [684, 548, 36, 60], [648, 612, 90, 22], [716, 550, 50, 60], [664, 630, 94, 14], [764, 568, 12, 40], [786, 582, 26, 22],
  [712, 422, 20, 30], [722, 404, 14, 50], [766, 402, 12, 52], [780, 424, 18, 32], [726, 468, 10, 46], [783, 468, 9, 46], [732, 516, 56, 20],
  [808, 402, 12, 60], [812, 412, 14, 60], [826, 398, 68, 24], [800, 471, 54, 30], [846, 472, 74, 28], [800, 500, 10, 46], [868, 500, 32, 50], [890, 466, 30, 50],
  [810, 548, 64, 10], [836, 558, 66, 15], [836, 572, 8, 46], [866, 560, 32, 60], [840, 611, 54, 9],
  [842, 336, 30, 8], [874, 330, 30, 28], [888, 364, 22, 10], [900, 370, 20, 70], [922, 356, 28, 18], [928, 392, 22, 12], [905, 424, 24, 30], [872, 374, 28, 10], [925, 588, 30, 27],
  [470, 512, 20, 18], [466, 532, 24, 27], [472, 566, 14, 38], [533, 340, 26, 10], [552, 342, 20, 10]
], scatter);

// parts in the right board
each([
  [993, 364, 44, 28], [1030, 352, 32, 9], [1060, 353, 18, 40], [1030, 378, 38, 14],
  [1030, 574, 10, 60], [1058, 552, 44, 98], [1038, 596, 20, 18], [1084, 550, 18, 70],
  [1114, 552, 50, 26], [1113, 574, 16, 88], [1164, 548, 30, 92], [1126, 612, 66, 20], [1140, 628, 40, 14],
  [1277, 466, 20, 18], [1278, 488, 30, 40], [1306, 498, 28, 42], [1340, 498, 44, 46], [1278, 535, 104, 10], [1350, 470, 26, 14],
  [1205, 645, 80, 18], [1226, 656, 60, 12], [1340, 640, 50, 28], [1315, 648, 34, 20],
  [1386, 566, 12, 50], [1396, 576, 28, 20], [1392, 600, 14, 44], [1406, 614, 18, 30], [1386, 645, 14, 24],
  [1320, 333, 62, 10], [1350, 354, 28, 54], [1325, 350, 14, 8], [1328, 400, 36, 14], [1488, 376, 10, 28]
], scatter);

// large parts
each([
  [611, 527, 12, 15], [627, 527, 12, 15], [642, 527, 12, 15], [658, 527, 12, 15], [673, 527, 12, 15], [689, 527, 12, 15],
  [684, 480, 14, 13], [684, 495, 14, 13], [694, 449, 16, 13], [585, 598, 12, 15], [611, 590, 14, 8],
  [758, 560, 15, 12], [743, 575, 15, 12], [771, 606, 12, 16], [735, 611, 8, 14], [744, 611, 8, 14], [753, 611, 8, 14],
  [690, 552, 13, 8], [674, 568, 12, 8], [674, 578, 12, 8], [674, 588, 12, 8], [674, 598, 12, 8],
  [1037, 557, 13, 16], [1067, 568, 16, 13], [1078, 610, 16, 13], [1113, 576, 14, 16], [1144, 618, 16, 13], [1163, 618, 16, 13], [1329, 487, 19, 16], [1390, 607, 13, 16],
  [1060, 623, 7, 15], [1069, 623, 7, 15], [1087, 640, 10, 18]
], function (x, y, w, h) { part(x, y, w, h, YELLOW); });

// chips
each([[667, 390, 52, 18], [497, 546, 42, 17], [522, 656, 34, 17], [575, 649, 74, 17], [675, 655, 87, 17]], connector);
box(573, 486, 18, 41);
grid(575, 495, 1, 7, 1, 4, 2, 2, YELLOW);
grid(588, 490, 1, 8, 1, 4, 2, 2, YELLOW);
bga(630, 474, 41, 44, [YELLOW, YELLOW, YELLOW, GRAY], 0.93);
bga(736, 471, 45, 45, [YELLOW, YELLOW, GRAY, GRAY, TEAL], 1);
bga(768, 578, 17, 25, [YELLOW, YELLOW, GRAY], 1);
bga(600, 598, 9, 15, [YELLOW], 1);
box(648, 546, 35, 65);
grid(650, 548, 6, 2, 5, 5, 3, 3, GRAY);
grid(650, 559, 4, 10, 5, 5, 3, 3, GRAY);
box(735, 401, 29, 52);
pins(735, 401, 29, 52, 4);
grid(740, 407, 2, 5, 10, 8, 8, 7, GRAY);
box(778, 404, 18, 17);
pins(778, 404, 18, 17, 4);
rect(784, 409, 7, 7, GRAY);
box(825, 422, 65, 49);
pins(825, 422, 65, 49, 4);
grid(831, 427, 8, 10, 7, 4, 5, 3, GRAY);
box(810, 500, 57, 46);
pins(810, 500, 57, 46, 4);
grid(815, 506, 8, 9, 6, 4, 4, 2, GRAY);
box(843, 573, 21, 36);
pins(843, 573, 21, 36, 4);
grid(848, 578, 2, 3, 7, 10, 5, 7, GRAY);
box(930, 374, 19, 18);
pins(930, 374, 19, 18, 4);
rect(936, 379, 7, 8, GRAY);
box(910, 411, 14, 13);
rect(913, 413, 7, 7, GRAY);
box(926, 449, 21, 20);
rect(927, 454, 3, 10, GRAY);
rect(942, 454, 4, 10, GRAY);
rect(934, 450, 4, 3, YELLOW);
box(917, 532, 20, 21);
rect(922, 533, 10, 3, GRAY);
rect(922, 548, 10, 3, GRAY);
rect(918, 541, 3, 3, YELLOW);
box(907, 640, 37, 22);
out.push('<path d="M908 646l5-4 6 4-6 8-5-4zM919 645l6-4 18 13-5 8-17-12z" fill="' + GRAY + '"/>');
box(910, 588, 7, 15);
rect(911, 600, 6, 3, GRAY);
box(583, 442, 22, 17);
rect(584, 443, 6, 5, GRAY);
rect(598, 443, 6, 5, YELLOW);
rect(584, 454, 6, 5, YELLOW);
rect(598, 454, 6, 5, YELLOW);
box(624, 572, 15, 14);
box(688, 618, 13, 17);
pins(688, 618, 13, 17, 4);
box(606, 391, 12, 15);
rect(607, 392, 11, 8, YELLOW);
rect(607, 402, 11, 4, GRAY);
box(813, 649, 38, 23);
pins(813, 649, 38, 23, 10);
rect(815, 651, 6, 4, YELLOW);
rect(843, 651, 6, 4, YELLOW);
rect(815, 668, 6, 4, YELLOW);
rect(843, 668, 6, 4, YELLOW);
box(485, 460, 16, 9);
rect(487, 461, 6, 3, GRAY);
rect(495, 461, 6, 3, GRAY);
rect(487, 466, 6, 3, GRAY);
rect(495, 466, 6, 3, GRAY);
line('M732.500 391V373.500H768.500V390.500H732', LINE, 1);
rect(733, 388, 19, 2, YELLOW);
rect(756, 388, 11, 3, YELLOW);
rect(736, 375, 3, 9, YELLOW);
rect(810, 390, 15, 3, YELLOW);
box(830, 357, 6, 27);
rect(831, 358, 3, 9, YELLOW);
rect(833, 370, 3, 11, YELLOW);
box(572, 342, 12, 10);
box(478, 339, 12, 5);
box(875, 360, 13, 10);
rect(878, 361, 6, 3, GRAY);
each([[479, 327, 8, 10], [534, 324, 8, 9], [550, 324, 8, 10], [567, 323, 7, 4], [567, 330, 7, 4], [451, 578, 8, 10], [451, 600, 8, 10], [450, 622, 9, 10], [958, 592, 10, 8], [958, 608, 10, 8], [958, 624, 10, 9], [845, 320, 8, 10], [860, 320, 8, 10],
  [1010, 659, 7, 10], [1023, 659, 7, 10], [1036, 659, 8, 10], [1417, 661, 8, 10], [1430, 661, 8, 10], [1150, 388, 8, 3], [1175, 388, 8, 3]
], function (x, y, w, h) { rect(x, y, w, h, YELLOW); });
each([[575, 364, 8, 14], [486, 602, 9, 13], [1013, 601, 7, 8], [1474, 592, 8, 10], [1493, 413, 7, 9]], function (x, y, w, h) { rect(x, y, w, h, GRAY); });

bga(1038, 358, 20, 19, [YELLOW, GRAY, TEAL], 1);
bga(1039, 576, 16, 19, [YELLOW, TEAL], 1);
bga(1038, 616, 20, 19, [YELLOW], 1);
bga(1130, 578, 34, 32, [YELLOW, YELLOW, YELLOW, GRAY], 1);
bga(1194, 550, 93, 93, [YELLOW, YELLOW, YELLOW, GRAY, GRAY], 0.95);
bga(1406, 594, 15, 18, [YELLOW, GRAY], 1);
box(1127, 630, 15, 15);
rect(1130, 633, 8, 8, YELLOW);
box(1126, 648, 12, 17);
rect(1127, 649, 11, 8, YELLOW);

// memory chip
box(1305, 547, 69, 92);
for (var r = 549; r < 638; r += 4) {
  var gap = (r > 560 && r < 570) || (r > 616 && r < 624);
  for (var c = 1312; c < 1340; c += 4) {
    if (!gap) ball(c, r, r > 588 && r < 596 ? TEAL : pick([YELLOW, YELLOW, GRAY]));
  }
  for (c = 1352; c < 1368; c += 4) ball(c, r, c === 1356 ? pick([GRAY, TEAL]) : YELLOW);
}
box(1310, 359, 41, 41);
pins(1310, 359, 41, 41, 3);
rect(1317, 366, 28, 27, GRAY);
box(1329, 507, 13, 16);
rect(1329, 509, 12, 9, GRAY);
box(1342, 311, 35, 14);
each([[1343, 312, 6, 4], [1344, 320, 4, 5], [1351, 320, 5, 5], [1359, 322, 8, 2], [1370, 320, 6, 4]], function (x, y, w, h) { rect(x, y, w, h, YELLOW); });
rect(1351, 312, 8, 2, GRAY);
rect(1362, 312, 5, 5, GRAY);
rect(1370, 312, 6, 5, TEAL);
each([[993, 330, 13, 24], [1086, 358, 24, 13], [993, 567, 24, 13], [1050, 658, 23, 13], [1282, 329, 24, 13], [1433, 322, 24, 14], [1497, 470, 14, 23], [1482, 653, 16, 22]], box);
each([[1001, 330, 6, 4], [1087, 359, 4, 5], [1096, 369, 7, 2], [994, 568, 4, 5], [1051, 659, 4, 5], [1302, 335, 4, 7], [1289, 329, 7, 2], [1452, 329, 4, 6], [1508, 477, 2, 6], [1498, 489, 6, 4], [1490, 656, 5, 4], [1492, 668, 5, 5]], function (x, y, w, h) { rect(x, y, w, h, GRAY); });

// card slot
line('M1003.500 405.500H1265.500V537.500H1003.500Z', LINE, 1);
grid(1011, 437, 2, 1, 8, 1, 4, 14, GRAY);
grid(1011, 461, 2, 1, 8, 1, 4, 15, GRAY);
grid(1011, 486, 2, 1, 8, 1, 3, 14, GRAY);
each([[1035, 406, 15, 5], [1126, 406, 22, 5], [1183, 406, 11, 5], [1222, 406, 17, 5], [1041, 529, 22, 7], [1133, 530, 22, 6], [1205, 530, 17, 6], [1232, 529, 11, 7], [1259, 430, 5, 8], [1259, 465, 5, 9], [1255, 524, 7, 12], [1004, 409, 8, 2], [1004, 519, 8, 2], [1101, 466, 4, 5], [1110, 466, 3, 5], [1177, 463, 5, 5], [1186, 463, 4, 5]], function (x, y, w, h) { rect(x, y, w, h, GRAY); });
for (var t = 433; t < 500; t += 8.6) rect(1068, Math.round(t), 13, 4, TEAL);
grid(1104, 443, 3, 1, 20, 1, 5, 5, TEAL);
grid(1104, 481, 3, 1, 20, 1, 5, 4, TEAL);
grid(1180, 440, 3, 1, 20, 1, 5, 5, TEAL);
grid(1180, 478, 3, 1, 20, 1, 5, 4, TEAL);
grid(1085, 449, 1, 7, 1, 8, 3, 2, YELLOW);
rect(1099, 429, 3, 3, YELLOW);
rect(1032, 429, 4, 3, TEAL);
rect(1032, 498, 4, 3, TEAL);
grid(1101, 458, 3, 1, 9, 1, 4, 5, YELLOW);
grid(1131, 458, 3, 1, 8, 1, 4, 5, YELLOW);
grid(1139, 466, 2, 1, 8, 1, 4, 5, YELLOW);
grid(1177, 455, 3, 1, 9, 1, 4, 5, YELLOW);
grid(1208, 455, 3, 1, 8, 1, 4, 5, YELLOW);
grid(1216, 463, 2, 1, 8, 1, 4, 5, YELLOW);
rect(1119, 466, 3, 5, TEAL);
rect(1131, 466, 4, 5, TEAL);
rect(1194, 463, 4, 5, TEAL);
rect(1208, 463, 4, 5, TEAL);
grid(1246, 457, 1, 3, 1, 9, 5, 6, YELLOW);
part(1161, 387, 12, 2);
part(1161, 391, 12, 2);
dot(1253, 502, 5, GRAY);

// shield frames
each([
  ['M597 344V330L600 329H632L633 338L637 346L654 363V372L648 380H597V352'],
  ['M651 424H580Q577 424 577 428V462Q578 467 584 468Q600 470 601 482V576Q600 583 594 584H574Q567 586 567 594V628Q568 636 576 637H658L668 646H757L770 643L785 628L815 625Q829 622 829 605V575Q825 566 808 565L789 546H722Q715 545 715 536V450Q714 444 706 444H692Q686 453 678 455Q655 455 651 440Z'],
  ['M784 396H735Q730 397 730 402V417L722 419L710 420Q705 422 705 428V436Q708 439 716 440L720 450Q724 458 732 458H793Q800 457 800 450V400Q799 397 795 397H790'],
  ['M725 463H786Q792 463 792 468V536Q791 541 786 541H728Q721 540 721 533V468Q722 463 725 463Z'],
  ['M869 388H845L834 397L812 399Q806 400 806 409M806 412V458L798 467V546L808 558L825 559Q835 562 835 575V619Q836 621 840 621H885Q893 620 893 614V575L901 543'],
  ['M908 527L921 503V465L918 464M877 389H893Q899 391 899 396V437M905 450L911 458'],
  ['M917 366Q918 357 925 354H930L947 364Q951 366 951 370V400Q951 405 947 406H928Q924 405 924 400V377L918 371Z'],
  ['M994 360H1012L1026 349H1074Q1080 351 1080 356V383Q1078 394 1068 396H994Q989 394 989 388V364Q990 360 994 360Z'],
  ['M1046 546H1099Q1104 548 1104 553V657Q1103 662 1098 662H1082Q1080 649 1072 645L1058 644L1054 640H1030Q1025 638 1025 632V564Z'],
  ['M1191 671V660Q1188 645 1172 644Q1153 648 1150 661V669H1117Q1110 668 1110 663V555Q1111 548 1117 548H1162L1165 544H1271Q1273 543 1273 538V463Q1274 458 1280 458H1336L1350 466H1380Q1386 468 1386 474V535L1389 540L1390 560L1395 566H1420Q1426 568 1426 574V640Q1426 648 1418 649H1407Q1402 652 1401 662Q1400 671 1393 671Z'],
  ['M1368 354L1361 347H1317L1293 371V409Q1294 416 1302 416H1373Q1379 414 1379 408V365L1373 359']
], function (d) { line(d, LINE, 2); });
out.push('</g>');

// drill holes and test points
each([[660, 339], [672, 434], [556, 457], [453, 481], [467, 665], [853, 360], [950, 344], [946, 569], [782, 664], [890, 661]], hole);
hole(510, 333, GRAY);
dot(666.5, 362.5, 4, TEAL);
dot(666.5, 362.5, 2, '#fff');
out.push('<rect x="543" y="540" width="16" height="22" rx="8" fill="' + TEAL + '"/>');
dot(550.5, 550.5, 6, '#fff');
each([[494, 507, 3], [494, 520, 3], [587, 553, 4], [587, 568, 4], [502, 665, 4], [663, 656, 3], [663, 667, 3], [793, 640, 4], [828, 632, 4], [844, 631, 3], [881, 632, 3], [865, 648, 3]], function (x, y, r) { dot(x, y, r, YELLOW); });
dot(865, 631, 4, GRAY);
dot(495, 652, 4, GRAY);
dot(491, 635, 2, GRAY);
dot(960, 379, 2, GRAY);
dot(1208, 671, 2.5, '#00f');
each([[736, 379], [760, 389], [816, 391], [834, 377]], function (x, y) { dot(x, y, 2, '#fff'); });

// faint over the copper
watermark(708, 672, 0.3);
watermark(1158, 672, 0.3);

document.getElementById('board').innerHTML = out.join('');
```
